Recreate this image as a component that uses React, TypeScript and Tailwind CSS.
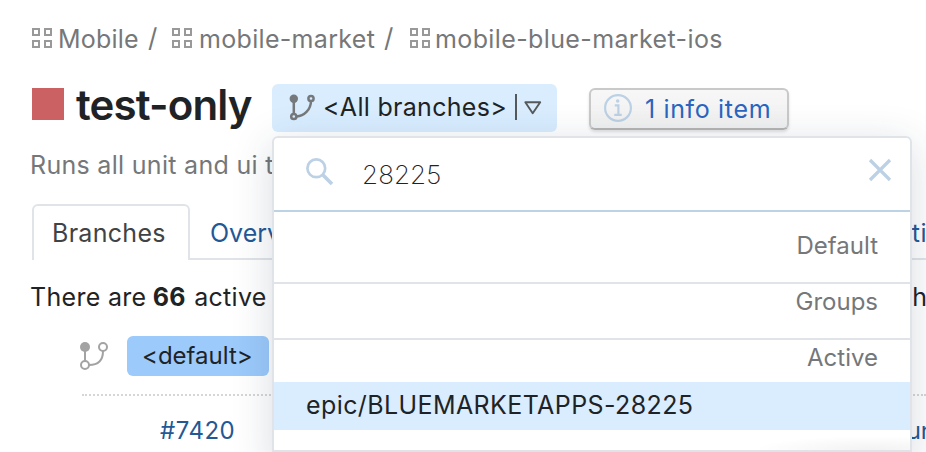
import React from "react";

const GridIcon = () => (
  <svg className="block shrink-0" width="20" height="20" viewBox="0 0 20 20" fill="none" stroke="#999999" strokeWidth="2" shapeRendering="crispEdges">
    <rect x="1" y="1" width="6" height="6" />
    <rect x="13" y="1" width="6" height="6" />
    <rect x="1" y="13" width="6" height="6" />
    <rect x="13" y="13" width="6" height="6" />
  </svg>
);

const Crumb = ({ label, className }: { label: string; className: string }) => (
  <div className="flex h-10 items-center">
    <GridIcon />
    <span className={`mt-px whitespace-nowrap ${className}`}>{label}</span>
  </div>
);

const Separator = ({ className }: { className: string }) => (
  <span className={`w-[9px] text-[26px] ${className}`}>/</span>
);

const SectionLabel = ({ label, className }: { label: string; className: string }) => (
  <div className={`flex items-center justify-end border-b-2 pr-8 text-[24px] text-[#757779] ${className}`}>
    <span>{label}</span>
  </div>
);

const BranchMenu = () => (
  <div className="absolute top-[136px] left-[272px] h-[330px] w-[640px] rounded-[6px] border-2 border-[#e0e4e9] bg-white bg-clip-padding shadow-[0_8px_40px_rgba(31,50,80,0.17)]">
    <div className="flex h-[74px] items-center border-b-2 border-[#bcd2e5] pl-8">
      <svg className="-mt-1 shrink-0" width="28" height="28" viewBox="0 0 28 28" fill="none" stroke="#bcd1e5">
        <circle cx="10.3" cy="10.3" r="8.9" strokeWidth="2.7" />
        <path d="M16.7 16.7 L26 26" strokeWidth="3.6" />
      </svg>
      <span className="mt-px ml-[28px] grow text-[26px] font-extralight tracking-[0.1px] text-[#1f2326]">28225</span>
      <svg className="mr-[18px] -mt-2 shrink-0" width="24" height="24" viewBox="0 0 24 24" fill="none" stroke="#bcd1e5" strokeWidth="3.2">
        <path d="M2 2 L22 22 M22 2 L2 22" />
      </svg>
    </div>
    <SectionLabel label="Default" className="h-[72px] border-[#e0e4e9] pb-[3px]" />
    <SectionLabel label="Groups" className="h-[56px] border-[#e0e4e9] pb-[18px]" />
    <SectionLabel label="Active" className="h-[42px] border-transparent pb-[4px]" />
    <div className="flex h-12 items-center bg-[#d9edff] pb-0.5 pl-8 tracking-[0.4px] text-[#1f2326]">
      <span className="whitespace-nowrap">epic/BLUEMARKETAPPS-28225</span>
    </div>
    <div className="flex h-[22px] justify-end border-b-2 border-[#e0e4e9]">
      <div className="w-[150px] bg-[radial-gradient(ellipse_80%_70%_at_75%_100%,rgba(0,0,0,0.05),transparent)]" />
    </div>
  </div>
);

export default function App() {
  return (
    <div className="relative h-[452px] w-[926px] overflow-hidden bg-white font-['Inter',sans-serif] text-[25px] leading-[40px] text-[#1f2326]">
      <nav className="flex h-[84px] items-start pt-[18px] pl-8 text-[#757779]">
        <Crumb label="Mobile" className="ml-[6px] w-[81px] tracking-[0.2px]" />
        <Separator className="mr-[15px] ml-[9px]" />
        <Crumb label="mobile-market" className="ml-[7px] w-[178px] tracking-[0.32px]" />
        <Separator className="mr-[17px] ml-[7px]" />
        <Crumb label="mobile-blue-market-ios" className="ml-[5px] tracking-[0.38px]" />
      </nav>

      <header className="flex h-12 items-start pl-8">
        <div className="mt-1 size-8 shrink-0 bg-[#cc6164]" />
        <h1 className="-mt-px ml-3 w-[176px] shrink-0 text-[42px] leading-[44px] font-semibold tracking-[-0.85px] whitespace-nowrap">test-only</h1>
        <button className="ml-5 flex h-12 w-[285px] shrink-0 items-center rounded-[6px] bg-[#d9edff] pl-[17px]">
          <svg className="-mt-0.5 shrink-0" width="26" height="27" viewBox="0 0 26 27" fill="none" stroke="#75797c" strokeWidth="2.5">
            <circle cx="4.8" cy="4.8" r="4.2" fill="#75797c" stroke="none" />
            <circle cx="22" cy="4.5" r="2.6" />
            <circle cx="4.8" cy="22.5" r="2.6" />
            <path d="M4.8 7 V20 M7.5 22.6 C15 22 21.8 16 22 7" />
          </svg>
          <span className="-mt-0.5 ml-[8px] w-[185px] text-left tracking-[0.3px] whitespace-nowrap">&lt;All branches&gt;</span>
          <span className="-mt-0.5 ml-[7px] h-[26px] w-[2px] bg-[#55595c]" />
          <svg className="ml-[6px]" width="20" height="16" viewBox="0 0 20 16" fill="none" stroke="#55595c" strokeWidth="1.9" strokeLinejoin="round">
            <path d="M2.3 2.3 H17.2 L9.7 13.3 Z" />
          </svg>
        </button>
        <button className="mt-1 ml-8 flex h-[42px] w-[200px] shrink-0 items-center rounded-[6px] border-2 border-[#c9c9c9] border-b-[#b5b5b5] bg-linear-to-b from-[#f7f7f7] to-[#f0f0f0] pl-[13px] text-[#2a65c0] shadow-[0_2px_3px_rgba(0,0,0,0.12)]">
          <svg className="-mt-0.5 shrink-0" width="28" height="28" viewBox="0 0 28 28" fill="none" stroke="#bcd1e5">
            <circle cx="14" cy="14" r="12.9" strokeWidth="2.2" />
            <circle cx="13.7" cy="7" r="1.8" fill="#bcd1e5" stroke="none" />
            <path d="M10.8 11.3 H14.4 V20.5 M10.3 20.8 H17.7" strokeWidth="2.2" />
          </svg>
          <span className="ml-[13px] tracking-[0.65px] whitespace-nowrap">1 info item</span>
        </button>
      </header>

      <p className="mt-[13px] h-[59px] pl-[30px] tracking-[0.3px] whitespace-nowrap text-[#757779]">Runs all unit and ui t</p>

      <div className="flex h-14 pl-8">
        <div className="flex w-[158px] shrink-0 items-center rounded-t-[6px] border-2 border-b-0 border-[#e0e4e9] pl-[18px] tracking-[0.3px] text-[#404345]">
          <span>Branches</span>
        </div>
        <div className="flex grow items-center justify-between border-b-2 border-[#e0e4e9] pt-[3px] pl-[20px] text-[#235895]">
          <span>Overview</span>
          <span className="-mr-px tracking-[0.5px]">sti</span>
        </div>
      </div>

      <div className="flex h-[76px] items-start justify-between pt-[17px] pl-[30px]">
        <p className="tracking-[0.3px] whitespace-nowrap">There are <b className="mr-px -ml-px font-bold">66</b> active branches</p>
        <p className="-mr-px">h</p>
      </div>

      <div className="ml-[82px] flex h-[60px] items-start border-b-2 border-dotted border-[#d6d6d6]">
        <svg className="mt-1.5 -ml-[2px] shrink-0" width="28" height="28" viewBox="0 0 28 28" fill="none" stroke="#a3a3a3" strokeWidth="2">
          <circle cx="5" cy="5" r="5" fill="#a3a3a3" stroke="none" />
          <circle cx="23" cy="5" r="4" />
          <circle cx="5" cy="23" r="4" />
          <path d="M5 9 V19 M9 23 C18 23 23 18 23 9" />
        </svg>
        <span className="ml-[19px] h-10 w-[142px] rounded-[6px] bg-[#9bcafb] pl-[15px] text-[24px] whitespace-nowrap">&lt;default&gt;</span>
      </div>

      <div className="flex h-[56px] items-start justify-between pt-[15px] pl-[160px] text-[24px] text-[#235895]">
        <span className="tracking-[0.5px]">#7420</span>
        <span className="-mr-[9px]">un</span>
      </div>

      <BranchMenu />
    </div>
  );
}
